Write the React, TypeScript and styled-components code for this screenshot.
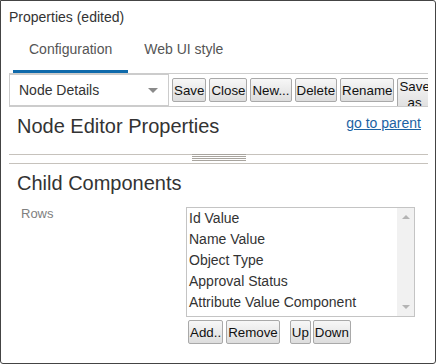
import { styled, createGlobalStyle } from 'styled-components';

const GlobalStyle = createGlobalStyle`
  body {
    margin: 0;
    font-family: "Liberation Sans", Arial, sans-serif;
    color: #333;
    background: #fff;
  }
`;

const Frame = styled.div`
  width: 436px;
  height: 364px;
  box-sizing: border-box;
  border: 1px solid #444;
  border-radius: 0 3px 3px 3px;
  padding: 0 7px 0 8px;
  overflow: hidden;
  display: flex;
  flex-direction: column;
`;

const Title = styled.div`
  height: 32px;
  line-height: 32px;
  font-size: 14px;
  color: #333;
`;

const TabBar = styled.div`
  display: flex;
  padding-left: 4px;
`;

const Tab = styled.div<{ $active?: boolean }>`
  height: 40px;
  padding: 7px 16px 0;
  box-sizing: border-box;
  line-height: 18px;
  font-size: 14px;
  color: #555;
  border-bottom: 3px solid ${(p) => (p.$active ? '#0f6aab' : 'transparent')};
`;

const Toolbar = styled.div`
  display: flex;
  align-items: flex-start;
  gap: 3px;
  height: 34px;
  box-sizing: border-box;
  border-top: 1px solid #ccc;
  border-bottom: 1px solid #ccc;
  overflow: hidden;
`;

const Select = styled.div`
  flex: 0 0 160px;
  height: 32px;
  box-sizing: border-box;
  border: 1px solid #ccc;
  display: flex;
  align-items: center;
  justify-content: space-between;
  padding: 0 10px 0 9px;
  font-size: 14px;
  color: #333;
  background: #fff;
`;

const Caret = styled.span`
  width: 0;
  height: 0;
  border-left: 5px solid transparent;
  border-right: 5px solid transparent;
  border-top: 5px solid #8a8a8a;
`;

const Button = styled.button<{ $wrap?: boolean; $space?: number }>`
  flex-shrink: ${(p) => (p.$wrap ? 1 : 0)};
  min-height: 24px;
  margin-top: 4px;
  margin-left: ${(p) => p.$space ?? 0}px;
  padding: 0 1px;
  box-sizing: border-box;
  border: 1px solid #a9a9a9;
  border-radius: 2px;
  background: linear-gradient(#f7f7f7, #dddddd);
  font-family: "Liberation Sans", Arial, sans-serif;
  font-size: 13.33px;
  line-height: ${(p) => (p.$wrap ? 16 : 15)}px;
  color: #111;
  white-space: ${(p) => (p.$wrap ? 'normal' : 'nowrap')};
  text-align: center;
`;

const SectionHead = styled.div<{ $top: number; $bottom: number }>`
  display: flex;
  justify-content: space-between;
  align-items: flex-start;
  padding: ${(p) => p.$top}px 7px ${(p) => p.$bottom}px 8px;
`;

const Heading = styled.div`
  font-size: 20px;
  line-height: 24px;
  color: #333;
`;

const Link = styled.a`
  font-size: 14px;
  line-height: 18px;
  color: #1b62a3;
  text-decoration: underline;
`;

const Splitter = styled.div`
  height: 10px;
  box-sizing: border-box;
  border-top: 1px solid #c6c2bc;
  border-bottom: 1px solid #c6c2bc;
  display: flex;
  justify-content: center;
`;

const Grip = styled.div`
  width: 54px;
  height: 7px;
  margin-top: -1px;
  background: repeating-linear-gradient(#a8a49e 0 1px, transparent 1px 2px);
`;

const FieldRow = styled.div`
  display: grid;
  grid-template-columns: 177px 229px;
  margin-top: 12px;
`;

const Label = styled.div`
  padding: 0 0 0 12px;
  margin-top: -1px;
  font-size: 13px;
  line-height: 16px;
  color: #808080;
`;

const ListBox = styled.div`
  height: 110px;
  box-sizing: border-box;
  border: 1px solid #c4c4c4;
  display: flex;
  background: #fff;
`;

const Items = styled.div`
  flex: 1;
  padding-left: 2px;
`;

const Item = styled.div`
  font-size: 14px;
  line-height: 21px;
  color: #333;
  white-space: nowrap;
`;

const ScrollTrack = styled.div`
  width: 17px;
  background: #f1f1f1;
  display: flex;
  flex-direction: column;
  justify-content: space-between;
  align-items: center;
  padding: 7px 0;
`;

const Arrow = styled.span<{ $down?: boolean }>`
  width: 0;
  height: 0;
  border-left: 4px solid transparent;
  border-right: 4px solid transparent;
  ${(p) =>
    p.$down ? 'border-top: 4px solid #b4b4b4;' : 'border-bottom: 4px solid #b4b4b4;'}
`;

const ListActions = styled.div`
  display: flex;
  align-items: flex-start;
  padding-left: 2px;
  margin-top: -1px;
`;

const rows = ['Id Value', 'Name Value', 'Object Type', 'Approval Status', 'Attribute Value Component'];

export default function App() {
  return (
    <>
      <GlobalStyle />
      <Frame>
        <Title>Properties (edited)</Title>
        <TabBar>
          <Tab $active>Configuration</Tab>
          <Tab>Web UI style</Tab>
        </TabBar>
        <Toolbar>
          <Select>
            <span>Node Details</span>
            <Caret />
          </Select>
          <Button>Save</Button>
          <Button>Close</Button>
          <Button>New...</Button>
          <Button>Delete</Button>
          <Button>Rename</Button>
          <Button $wrap>Save as</Button>
        </Toolbar>
        <SectionHead $top={7} $bottom={16}>
          <Heading>Node Editor Properties</Heading>
          <Link href="#">go to parent</Link>
        </SectionHead>
        <Splitter>
          <Grip />
        </Splitter>
        <SectionHead $top={7} $bottom={0}>
          <Heading>Child Components</Heading>
        </SectionHead>
        <FieldRow>
          <Label>Rows</Label>
          <div>
            <ListBox>
              <Items>
                {rows.map((r) => (
                  <Item key={r}>{r}</Item>
                ))}
              </Items>
              <ScrollTrack>
                <Arrow />
                <Arrow $down />
              </ScrollTrack>
            </ListBox>
            <ListActions>
              <Button>Add..</Button>
              <Button $space={3}>Remove</Button>
              <Button $space={10}>Up</Button>
              <Button $space={2}>Down</Button>
            </ListActions>
          </div>
        </FieldRow>
      </Frame>
    </>
  );
}
